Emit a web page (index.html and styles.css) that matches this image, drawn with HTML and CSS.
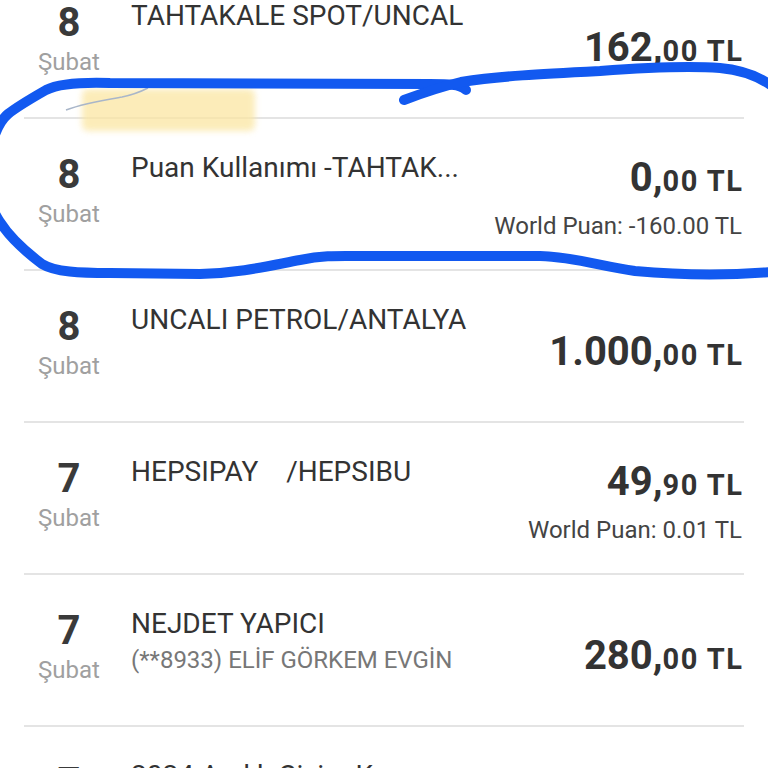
FILE: index.html
```html
<!DOCTYPE html>
<html lang="tr">
<head>
<meta charset="utf-8">
<title>Hesap Hareketleri</title>
<link rel="stylesheet" href="styles.css">
</head>
<body>
<div class="screen">
  <ul class="list">
    <li class="row">
      <div class="date"><span class="day">8</span><span class="month">Şubat</span></div>
      <div class="info"><div class="title">TAHTAKALE SPOT/UNCAL</div></div>
      <div class="amounts"><div class="amount"><span class="int">162,</span><span class="dec">00 TL</span></div></div>
    </li>
    <li class="row">
      <div class="date"><span class="day">8</span><span class="month">Şubat</span></div>
      <div class="info"><div class="title">Puan Kullanımı -TAHTAK...</div></div>
      <div class="amounts with-points"><div class="amount"><span class="int">0,</span><span class="dec">00 TL</span></div><div class="points">World Puan: -160.00 TL</div></div>
    </li>
    <li class="row">
      <div class="date"><span class="day">8</span><span class="month">Şubat</span></div>
      <div class="info"><div class="title">UNCALI PETROL/ANTALYA</div></div>
      <div class="amounts"><div class="amount"><span class="int">1.000,</span><span class="dec">00 TL</span></div></div>
    </li>
    <li class="row">
      <div class="date"><span class="day">7</span><span class="month">Şubat</span></div>
      <div class="info"><div class="title">HEPSIPAY&nbsp;&nbsp;&nbsp;&nbsp;/HEPSIBU</div></div>
      <div class="amounts with-points"><div class="amount"><span class="int">49,</span><span class="dec">90 TL</span></div><div class="points">World Puan: 0.01 TL</div></div>
    </li>
    <li class="row">
      <div class="date"><span class="day">7</span><span class="month">Şubat</span></div>
      <div class="info"><div class="title">NEJDET YAPICI</div><div class="sub">(**8933) ELİF GÖRKEM EVGİN</div></div>
      <div class="amounts"><div class="amount"><span class="int">280,</span><span class="dec">00 TL</span></div></div>
    </li>
    <li class="row">
      <div class="date"><span class="day">7</span><span class="month">Şubat</span></div>
      <div class="info"><div class="title">2024 Aralık Çizim Kazan</div></div>
      <div class="amounts"><div class="amount"><span class="int">0,</span><span class="dec">00 TL</span></div></div>
    </li>
  </ul>
  <svg class="annotation" width="768" height="768" viewBox="0 0 768 768" aria-hidden="true">
    <defs>
      <filter id="soft" x="-15%" y="-40%" width="130%" height="180%"><feGaussianBlur stdDeviation="3"/></filter>
    </defs>
    <rect x="82" y="89" width="173" height="42" rx="6" fill="#fbe6a2" opacity="0.75" filter="url(#soft)"/>
    <path d="M66,110 C84,103 104,100 122,97 C132,95 140,92 148,88" fill="none" stroke="#a9b6c9" stroke-width="1.5"/>
    <path d="M466,90 C460,84 448,84 430,84 L110,83 C80,82 58,84 46,90 C32,98 18,106 8,114 C-4,124 -12,150 -12,175 C-12,200 -8,210 0,222 C10,238 26,252 42,264 C55,272 80,273 110,273 L200,274 C240,273 268,266 300,260 C325,255 340,256 360,256 L540,256 C575,257 600,266 635,271 C680,275 720,276 770,272" fill="none" stroke="#1259f0" stroke-width="10" stroke-linecap="round" stroke-linejoin="round"/>
    <path d="M404,100 C420,94 440,87 461,82 C500,76 540,74 600,71 C640,68 690,66 720,68 C742,70 758,76 772,86" fill="none" stroke="#1259f0" stroke-width="10" stroke-linecap="round" stroke-linejoin="round"/>
  </svg>
</div>
</body>
</html>
```
FILE: styles.css
```css
* { box-sizing: border-box; }
html, body { margin: 0; padding: 0; background: #ffffff; }
body { font-family: Roboto, "Noto Sans", "Liberation Sans", sans-serif; color: #333333; }
.screen { position: relative; width: 768px; height: 768px; overflow: hidden; }
.list { list-style: none; margin: -33px 0 0 0; padding: 0 24px; }
.row {
  display: grid;
  grid-template-columns: 90px 1fr auto;
  column-gap: 17px;
  height: 152px;
  padding: 34px 2px 0 0;
  border-bottom: 2px solid #e4e4e4;
}
.date { display: flex; flex-direction: column; align-items: center; }
.day { font-size: 40px; font-weight: 700; line-height: 44px; color: #3a3a3a; }
.month { font-size: 24px; line-height: 30px; color: #a0a0a0; margin-top: 2px; }
.info { display: flex; flex-direction: column; }
.title { font-size: 28px; line-height: 30px; color: #333333; white-space: nowrap; }
.sub { font-size: 24px; line-height: 30px; color: #777777; margin-top: 6px; white-space: nowrap; }
.amounts { display: flex; flex-direction: column; align-items: flex-end; padding-top: 24px; }
.amounts.with-points { padding-top: 2px; }
.amount { color: #333333; font-weight: 700; line-height: 46px; white-space: nowrap; }
.int { font-size: 40px; }
.dec { font-size: 29px; letter-spacing: 1.5px; margin-right: -1.5px; }
.points { font-size: 24px; line-height: 30px; color: #444444; margin-top: 2px; white-space: nowrap; }
.annotation { position: absolute; left: 0; top: 0; pointer-events: none; }
```
